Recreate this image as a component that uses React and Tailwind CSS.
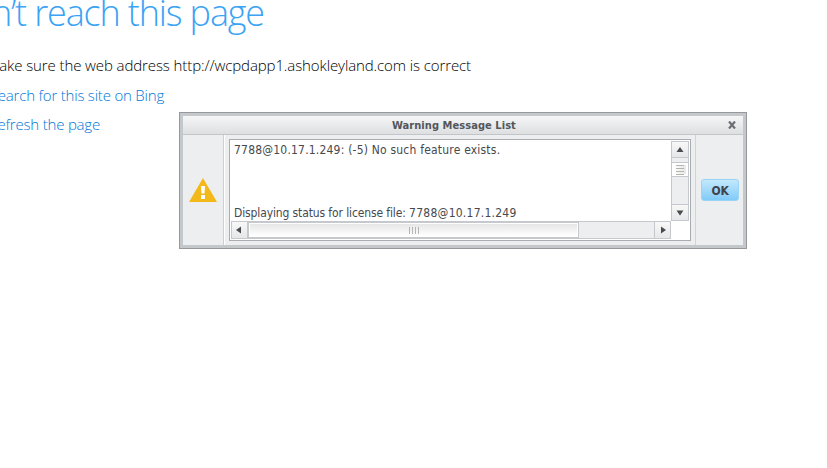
import React from "react";

const pageFont = "font-['Open_Sans','Noto_Sans',sans-serif]";
const dialogFont = "font-['DejaVu_Sans_Condensed','DejaVu_Sans',sans-serif]";

function Arrow({ d }) {
  return (
    <svg width="8" height="8" viewBox="0 0 8 8" fill="#484b50">
      <path d={d} />
    </svg>
  );
}

function ErrorPage() {
  return (
    <main className={`flex flex-col items-start whitespace-nowrap ${pageFont}`}>
      <h1 className="flex h-[50px] w-[264px] -mt-3 justify-end text-[36px] leading-[50px] font-light tracking-[-1.15px] text-[#3ba3f5]">
        n’t reach this page
      </h1>
      <p className="mt-[12px] flex h-[30px] w-[471px] justify-end text-[15px] leading-[30px] font-light tracking-[-0.1px] text-black">
        ake sure the web address http://wcpdapp1.ashokleyland.com is correct
      </p>
      <a className="flex h-[29px] w-[164px] justify-end text-[15px] leading-[30px] font-light tracking-[-0.2px] text-[#0078d7]">
        earch for this site on Bing
      </a>
      <a className="flex h-[30px] w-[100px] justify-end text-[15px] leading-[30px] font-light tracking-[-0.2px] text-[#0078d7]">
        efresh the page
      </a>
    </main>
  );
}

function VerticalScrollbar() {
  return (
    <div className="flex h-20 w-[18px] flex-col border-x border-[#c5c9cd] bg-[#edeef0]">
      <div className="flex h-[17px] items-center justify-center border-y border-[#c5c9cd] bg-linear-to-b from-[#f8f8f8] to-[#e6e7e9]">
        <Arrow d="M4 1 7.5 6H.5Z" />
      </div>
      <div className="mt-1 flex h-[15px] border-y border-[#c5c9cd]">
        <div className="flex flex-1 flex-col items-center justify-center gap-px border-2 border-white bg-linear-to-r from-white to-[#e6e6e6]">
          <i className="h-px w-2 shrink-0 bg-[#b4b4ae]" />
          <i className="mt-px h-px w-2 shrink-0 bg-[#b4b4ae]" />
          <i className="mt-px h-px w-2 shrink-0 bg-[#b4b4ae]" />
          <i className="mt-px h-px w-2 shrink-0 bg-[#b4b4ae]" />
        </div>
      </div>
      <div className="mt-auto flex h-[17px] items-center justify-center border-y border-[#c5c9cd] bg-linear-to-b from-[#f8f8f8] to-[#e6e7e9]">
        <Arrow d="M.5 1.5H7.5L4 6.5Z" />
      </div>
    </div>
  );
}

function HorizontalScrollbar() {
  return (
    <div className="flex h-[18px] w-[440px] border-y border-[#c5c9cd] bg-[#edeef0]">
      <div className="flex w-4 items-center justify-center border-l border-[#c5c9cd] bg-linear-to-b from-[#f8f8f8] to-[#e6e7e9]">
        <Arrow d="M0 4 5 .5V7.5Z" />
      </div>
      <div className="flex w-[332px] border border-l-2 border-[#c5c9cd]">
        <div className="flex flex-1 items-center justify-center gap-[2px] border border-white bg-linear-to-b from-[#e6e6e6] to-white">
          <i className="h-[7px] w-px bg-[#b4b4b4]" />
          <i className="h-[7px] w-px bg-[#b4b4b4]" />
          <i className="h-[7px] w-px bg-[#b4b4b4]" />
          <i className="h-[7px] w-px bg-[#b4b4b4]" />
        </div>
      </div>
      <div className="ml-auto flex w-[17px] items-center justify-center border-x border-[#c5c9cd] bg-linear-to-b from-[#f8f8f8] to-[#e6e7e9]">
        <Arrow d="M2 .5 7 4 2 7.5Z" />
      </div>
    </div>
  );
}

function WarningDialog() {
  return (
    <section className={`absolute left-[179px] top-[112px] h-[137px] w-[568px] border border-[#96989b] bg-[#c5c8cb] p-[3px] ${dialogFont}`}>
      <div className="flex h-[129px] flex-col bg-[#edeef0]">
        <header className="flex h-[19px] shrink-0 items-center border-b border-[#c3c6c9] bg-linear-to-b from-[#f6f6f7] to-[#dddfe1] pr-[7px] pl-[209px]">
          <h2 className="pt-px text-[11px] leading-[18px] font-bold tracking-[0.06px] whitespace-nowrap text-[#53565a]">
            Warning Message List
          </h2>
          <svg className="ml-auto" width="8" height="8" viewBox="0 0 8 8" stroke="#6c6f73" strokeWidth="2.2">
            <path d="M1 .5 7 7.5M7 .5 1 7.5" />
          </svg>
        </header>
        <div className="flex flex-1">
          <div className="flex w-[41px] items-center justify-center border-r border-[#cdd0d3] pb-px">
            <svg width="28" height="24" viewBox="0 0 28 24">
              <path d="M14 0 28 24H0Z" fill="#f3b91b" />
              <path d="M12 8h4l-.5 7.5h-3zM12 17h4v4h-4z" fill="#fff" />
            </svg>
          </div>
          <div className="flex w-[471px] border-l border-white pt-1 pl-[4px]">
            <div className="h-[102px] w-[462px] border border-[#a9acb0] bg-white pt-px pl-px">
              <div className="flex h-20">
                <div className="flex w-[440px] flex-col pt-px pl-[3px] text-[12px] leading-4 whitespace-nowrap text-[#46494d]">
                  <p className="h-16 tracking-[0.2px]">7788@10.17.1.249: (-5) No such feature exists.</p>
                  <p className="tracking-[-0.12px]">
                    Displaying status for license file: <span className="tracking-[0.25px]">7788@10.17.1.249</span>
                  </p>
                </div>
                <VerticalScrollbar />
              </div>
              <HorizontalScrollbar />
            </div>
          </div>
          <div className="flex flex-1 items-center border-l border-[#d2d4d7] pl-[5px]">
            <button className="h-[22px] w-[38px] rounded-[3px] border border-[#9ad3f3] bg-linear-to-b from-[#c3e8fc] to-[#80cbf9] pt-px text-[12px] leading-5 font-bold tracking-[-0.3px] text-[#3f4348]">
              OK
            </button>
          </div>
        </div>
      </div>
    </section>
  );
}

export default function App() {
  return (
    <div className="relative h-[468px] w-[827px] overflow-hidden bg-white">
      <ErrorPage />
      <WarningDialog />
    </div>
  );
}
